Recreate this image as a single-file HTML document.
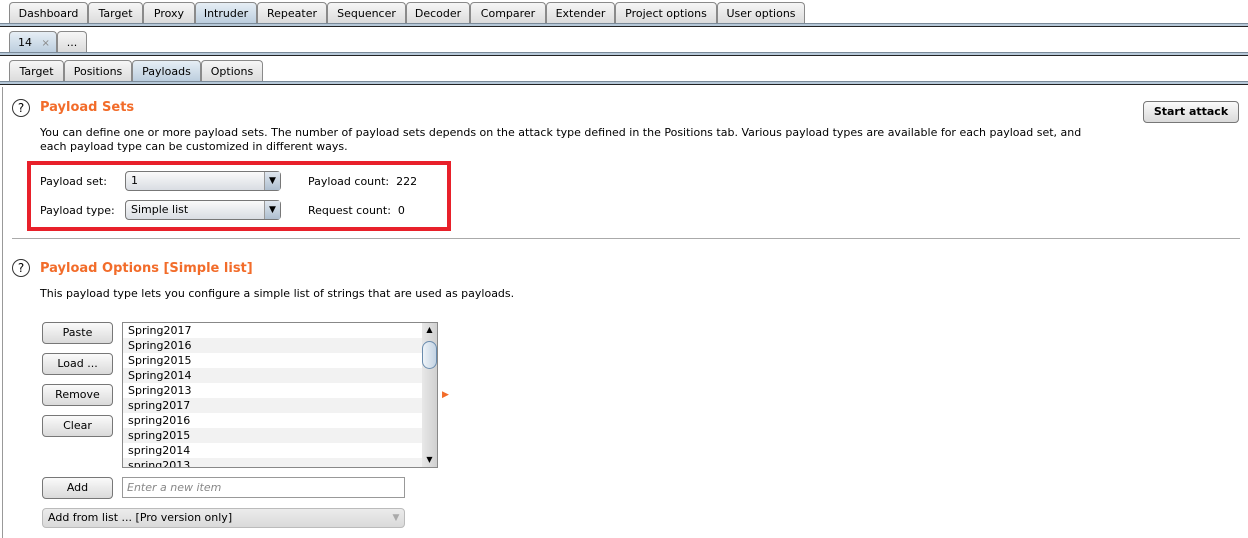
<!DOCTYPE html>
<html><head><style>
*{margin:0;padding:0;box-sizing:border-box}
body{width:1248px;height:538px;overflow:hidden;background:#fff;font-family:"DejaVu Sans","Liberation Sans",sans-serif;font-size:11px;color:#000;position:relative}
.a{position:absolute;white-space:nowrap}
.tab{position:absolute;height:21px;border:1px solid #8a8a8a;border-bottom:none;border-radius:4px 4px 0 0;background:linear-gradient(#f6f6f6,#dcdcdc);text-align:center;line-height:21px;font-size:11px}
.sel{background:linear-gradient(#e6eef5,#b8cbdc)}
.bar{position:absolute;left:0;width:1248px;height:4px;background:#b6c8d8;border-top:1px solid #7a8a99;border-bottom:1px solid #222}
.btn{position:absolute;width:71px;height:22px;border:1px solid #777;border-radius:4px;background:linear-gradient(#fafafa,#dadada);text-align:center;line-height:20px}
.sel2{position:absolute;height:20px;border:1px solid #777;border-radius:4px;background:linear-gradient(#fafafa,#d9dde3);line-height:18px;padding-left:5px}
.sel2 .ar{position:absolute;right:0;top:0;width:16px;height:18px;border-left:1px solid #999;background:linear-gradient(#dfe6ee,#aebfd0);font-size:9px;text-align:center;line-height:18px}
h2{position:absolute;color:#f26c2a;font-size:13px;font-weight:bold}
.q{position:absolute;width:18px;height:18px;border:1.3px solid #333;border-radius:50%;text-align:center;line-height:16px;font-size:12px}
.row{height:15px;line-height:15px;padding-left:5px}
</style></head><body>
<div class="tab" style="left:9px;top:2px;width:79px">Dashboard</div>
<div class="tab" style="left:88px;top:2px;width:55px">Target</div>
<div class="tab" style="left:143px;top:2px;width:52px">Proxy</div>
<div class="tab sel" style="left:195px;top:2px;width:62px;height:23px">Intruder</div>
<div class="tab" style="left:257px;top:2px;width:70px">Repeater</div>
<div class="tab" style="left:327px;top:2px;width:79px">Sequencer</div>
<div class="tab" style="left:406px;top:2px;width:64px">Decoder</div>
<div class="tab" style="left:470px;top:2px;width:76px">Comparer</div>
<div class="tab" style="left:546px;top:2px;width:69px">Extender</div>
<div class="tab" style="left:615px;top:2px;width:102px">Project options</div>
<div class="tab" style="left:717px;top:2px;width:88px">User options</div>
<div class="bar" style="top:23px"></div>
<div class="tab sel" style="left:9px;top:31px;width:48px;height:23px;text-align:left;padding-left:8px">14 <span style="color:#888;font-size:10px;margin-left:6px">×</span></div>
<div class="tab" style="left:57px;top:31px;width:30px">...</div>
<div class="bar" style="top:52px"></div>
<div class="tab" style="left:9px;top:60px;width:55px">Target</div>
<div class="tab" style="left:64px;top:60px;width:68px">Positions</div>
<div class="tab sel" style="left:132px;top:60px;width:69px;height:23px">Payloads</div>
<div class="tab" style="left:201px;top:60px;width:62px">Options</div>
<div class="bar" style="top:81px"></div>
<div style="position:absolute;left:2px;top:87px;width:1px;height:451px;background:#999"></div>

<div class="q" style="left:12px;top:99px">?</div>
<h2 style="left:40px;top:100px">Payload Sets</h2>
<div class="btn" style="left:1143px;top:101px;width:96px;height:22px;line-height:20px;font-weight:bold">Start attack</div>
<div class="a" style="left:40px;top:126px;line-height:14px">You can define one or more payload sets. The number of payload sets depends on the attack type defined in the Positions tab. Various payload types are available for each payload set, and<br>each payload type can be customized in different ways.</div>
<div style="position:absolute;left:27px;top:161px;width:424px;height:70px;border:4px solid #e8202a"></div>
<div class="a" style="left:40px;top:175px">Payload set:</div>
<div class="sel2" style="left:125px;top:171px;width:156px">1<div class="ar">▼</div></div>
<div class="a" style="left:308px;top:175px">Payload count:&nbsp; 222</div>
<div class="a" style="left:40px;top:204px">Payload type:</div>
<div class="sel2" style="left:125px;top:200px;width:156px">Simple list<div class="ar">▼</div></div>
<div class="a" style="left:308px;top:204px">Request count:&nbsp; 0</div>
<div style="position:absolute;left:12px;top:238px;width:1228px;height:1px;background:#aaa"></div>

<div class="q" style="left:12px;top:259px">?</div>
<h2 style="left:40px;top:261px">Payload Options [Simple list]</h2>
<div class="a" style="left:40px;top:287px">This payload type lets you configure a simple list of strings that are used as payloads.</div>
<div class="btn" style="left:42px;top:322px">Paste</div>
<div class="btn" style="left:42px;top:353px">Load ...</div>
<div class="btn" style="left:42px;top:384px">Remove</div>
<div class="btn" style="left:42px;top:415px">Clear</div>
<div style="position:absolute;left:122px;top:322px;width:316px;height:146px;border:1px solid #888;overflow:hidden;background:#fff">
<div class="row">Spring2017</div><div class="row" style="background:#f2f2f2">Spring2016</div><div class="row">Spring2015</div><div class="row" style="background:#f2f2f2">Spring2014</div><div class="row">Spring2013</div><div class="row" style="background:#f2f2f2">spring2017</div><div class="row">spring2016</div><div class="row" style="background:#f2f2f2">spring2015</div><div class="row">spring2014</div><div class="row" style="background:#f2f2f2">spring2013</div>
<div style="position:absolute;right:0;top:0;width:15px;height:144px;background:linear-gradient(90deg,#e8e8e8,#d0d0d0);font-size:8px;text-align:center">
<div style="height:14px;line-height:14px">▲</div>
<div style="position:absolute;left:0;top:18px;width:15px;height:28px;border:1px solid #6a8cae;border-radius:8px;background:linear-gradient(90deg,#eef3f8,#c3d3e3)"></div>
<div style="position:absolute;bottom:0;width:15px;height:14px;line-height:14px">▼</div></div>
</div>
<div class="a" style="left:442px;top:390px;color:#f26c2a;font-size:9px">▶</div>
<div class="btn" style="left:42px;top:477px">Add</div>
<div style="position:absolute;left:122px;top:477px;width:283px;height:21px;border:1px solid #999;background:#fff;color:#888;font-style:italic;line-height:19px;padding-left:4px">Enter a new item</div>
<div class="sel2" style="left:42px;top:508px;width:363px;height:20px;border-color:#bbb;background:linear-gradient(#ececec,#dadada)">Add from list ... [Pro version only]<div class="ar" style="background:none;border:none;color:#aaa">▼</div></div>
</body></html>
